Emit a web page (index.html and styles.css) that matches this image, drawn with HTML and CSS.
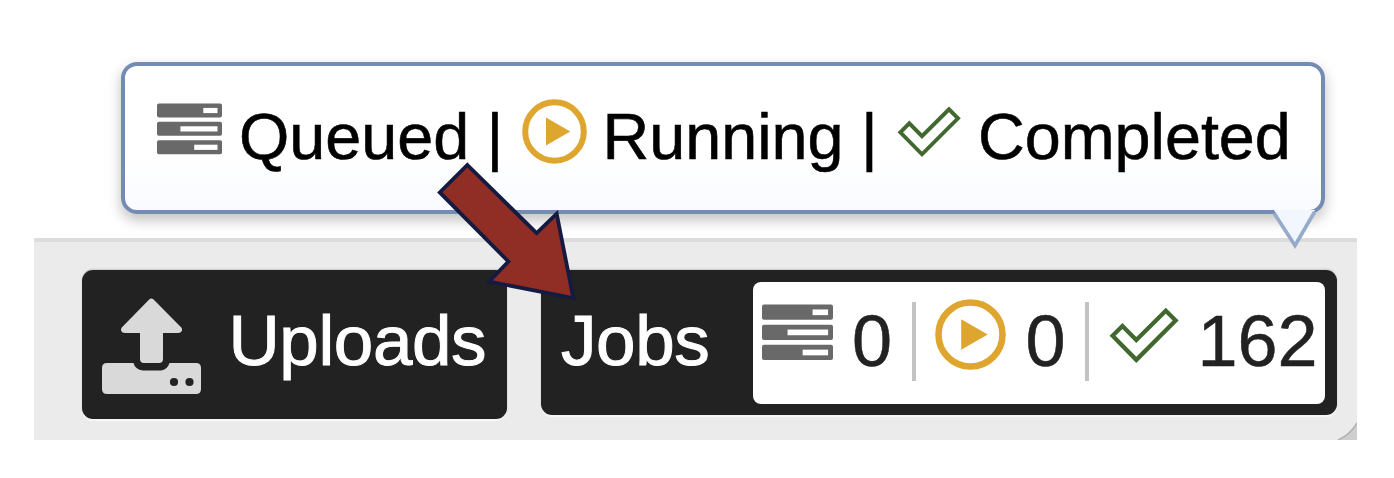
FILE: index.html
```html
<!DOCTYPE html>
<html lang="en">
<head>
<meta charset="utf-8">
<title>Jobs status</title>
<link rel="stylesheet" href="styles.css">
</head>
<body>
<svg class="defs" width="0" height="0">
  <symbol id="queued" viewBox="0 0 65 52">
    <g fill="#696969"><rect y="0.4" width="65" height="14" rx="1.8"/><rect y="18.8" width="65" height="14" rx="1.8"/><rect y="37.2" width="65" height="14" rx="1.8"/></g>
    <g fill="#fff"><rect x="46.3" y="4.9" width="14.2" height="5.2"/><rect x="23.4" y="23.3" width="37.1" height="5.2"/><rect x="37.2" y="41.7" width="23.3" height="5.2"/></g>
  </symbol>
  <symbol id="running" viewBox="0 0 65 65">
    <circle cx="32.5" cy="32.5" r="29.3" fill="none" stroke="#dea62e" stroke-width="6"/>
    <path d="M24 18.5 48.3 32.5 24 46.5Z" fill="#dea62e"/>
  </symbol>
  <symbol id="completed" viewBox="0 0 65 52">
    <path d="M3.3 26.3 12.3 17.3 25 30.2 52 3.3 61 12.3 25 48.3Z" fill="none" stroke="#41682f" stroke-width="3.9"/>
  </symbol>
</svg>
<main class="stage">
  <section class="tooltip">
    <div class="legend">
      <svg class="icon bars"><use href="#queued"/></svg>
      <span>Queued</span><span>|</span>
      <svg class="icon play"><use href="#running"/></svg>
      <span>Running</span><span>|</span>
      <svg class="icon check"><use href="#completed"/></svg>
      <span>Completed</span>
    </div>
    <svg class="pointer" viewBox="0 0 46 40">
      <path d="M2 0H43L23 35Z" fill="#f2f6fe"/>
      <path d="M2 3 23 35.5 42.5 2" fill="none" stroke="#96abc9" stroke-width="3.6"/>
    </svg>
  </section>
  <footer class="bar">
    <div class="button uploads">
      <svg class="upload-icon" viewBox="0 0 100 97">
        <g fill="#d9d9d9">
          <path d="M47.2 1.6Q49.4-.6 51.6 1.6L79.3 29.5Q81 32 79 34Q78 35 76 35H61V61Q61 65 57 65H42Q38 65 38 61V35H23Q20 35 19.3 33Q18.5 31 20 29.2Z"/>
          <path d="M5 65H31.5Q33 71.5 41 72.5H59Q65.5 71.5 67.5 65H94Q99 65 99 70V91Q99 96 94 96H5Q0 96 0 91V70Q0 65 5 65Z"/>
        </g>
        <circle cx="72" cy="84" r="4.1" fill="#222"/><circle cx="87.5" cy="84" r="4.1" fill="#222"/>
      </svg>
      <span class="label">Uploads</span>
    </div>
    <div class="button jobs">
      <span class="label">Jobs</span>
      <div class="counts">
        <svg class="icon bars"><use href="#queued"/></svg>
        <span>0</span><i class="divider"></i>
        <svg class="icon play"><use href="#running"/></svg>
        <span>0</span><i class="divider"></i>
        <svg class="icon check"><use href="#completed"/></svg>
        <span>162</span>
      </div>
    </div>
    <svg class="corner" viewBox="0 0 20 18"><path d="M1 18Q13 13 20 1V18Z" fill="#cecece"/><path d="M1 18Q13 13 20 1" fill="none" stroke="#b2b2b2" stroke-width="1.5"/></svg>
  </footer>
  <svg class="arrow" viewBox="430 155 155 155">
    <path d="M467.4 165 536.6 233.2 556.7 213.7 573.3 298.2 489.3 281.5 508.4 261.5 439.8 192.4Z" fill="#902d24" stroke="#151b40" stroke-width="3.8"/>
  </svg>
</main>
</body>
</html>
```
FILE: styles.css
```css
* { box-sizing: border-box; }
body { margin: 0; background: #fff; font-family: "Liberation Sans", Arial, sans-serif; }
.defs { display: block; }
.stage { position: relative; width: 1394px; height: 478px; padding: 62px 37px 0 34px; overflow: hidden; }
.tooltip {
  position: relative; z-index: 2; width: 1204px; height: 152px; margin-left: 87px;
  border: 4px solid #748bb4; border-radius: 16px; padding: 37px 0 0 32px;
  background: linear-gradient(#fff 60%, #f9fbff);
  box-shadow: 0 6px 14px rgba(0, 0, 0, .25);
}
.legend {
  display: grid; grid-template-columns: 82px 247.5px 35px 81px 258.5px 35.5px 81.5px 310px;
  color: #000; font-size: 64.7px; line-height: 68px; white-space: pre;
  -webkit-text-stroke: .6px #000;
}
.icon { display: block; overflow: visible; }
.legend .icon { width: 65px; }
.legend .bars { height: 52px; }
.legend .play { height: 65px; margin-top: -4.5px; }
.legend .check { height: 52px; margin-top: 2.5px; }
.pointer { position: absolute; left: 1147px; top: 144px; width: 46px; height: 40px; }
.bar {
  position: relative; display: flex; align-items: flex-start; gap: 34px;
  width: 1323px; height: 202px; margin-top: 24px; padding: 28px 20px 0 47.5px;
  background: #ebebeb; border-top: 4px solid #dcdcdc;
}
.button {
  display: flex; align-items: flex-start; background: #222; border-radius: 11px;
  box-shadow: 0 -1px 2px #c8c8c8, 0 2px 1px #f8f8f8; font-size: 71px; line-height: 80px;
}
.label { color: #fff; -webkit-text-stroke: 1px #fff; }
.uploads { width: 425px; height: 148.5px; padding: 31px 0 0 20px; }
.uploads .label { width: 264px; margin-left: 27px; letter-spacing: -.4px; }
.upload-icon { width: 100px; height: 97px; margin-top: -3px; flex: none; }
.jobs { width: 796.5px; height: 144.5px; padding: 12px 12px 0 20.5px; }
.jobs .label { width: 192px; margin-top: 18.5px; letter-spacing: -.4px; }
.counts {
  display: grid; grid-template-columns: 90px 60px 23.5px 90px 60px 24px 88px 120px;
  width: 572.5px; height: 122px; padding: 20px 0 0 9px; border-radius: 8px;
  background: #fff; color: #222; font-size: 72px; -webkit-text-stroke: .5px #222;
}
.counts .icon { width: 71px; }
.counts .bars { height: 57px; margin-top: 2px; }
.counts .play { height: 71px; margin-top: -3px; }
.counts .check { height: 57px; margin-top: 4.5px; }
.counts span { margin-top: -1px; }
.divider { width: 4px; height: 79px; background: #c3c3c3; }
.corner { position: absolute; right: 0; bottom: 0; width: 20px; height: 18px; }
.arrow { position: absolute; z-index: 3; left: 430px; top: 155px; width: 155px; height: 155px; }
```
